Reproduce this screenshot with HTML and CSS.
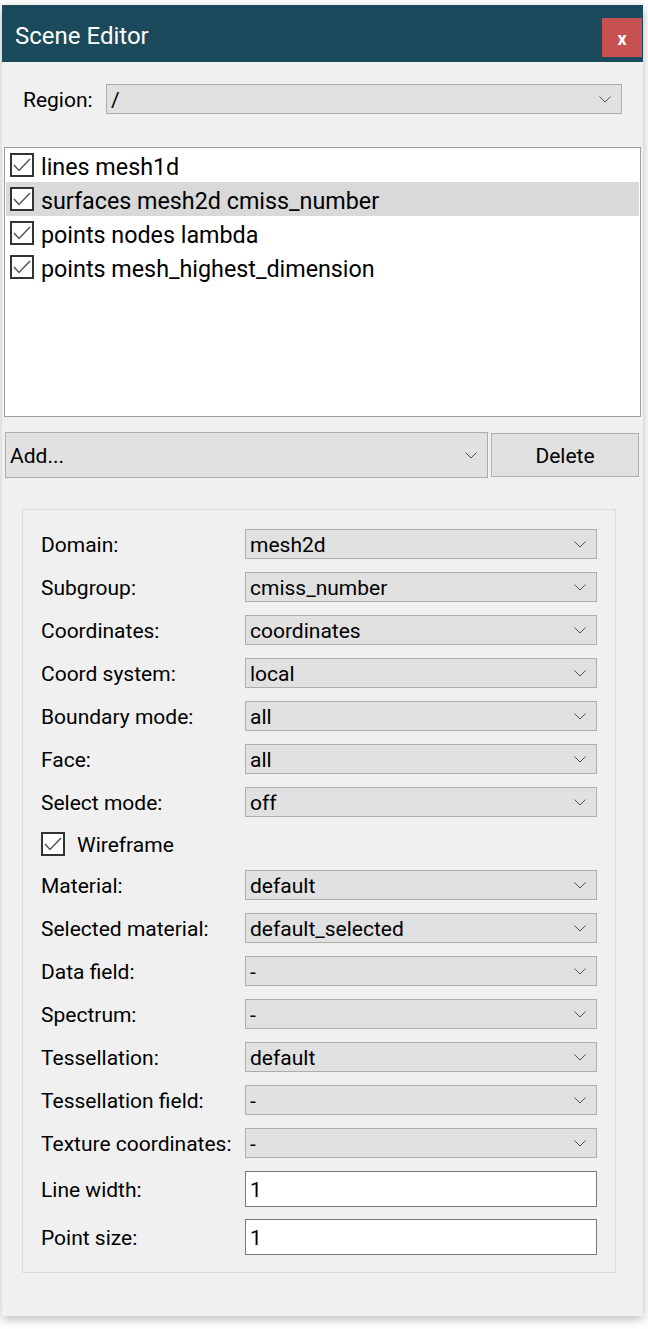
FILE: index.html
```html
<!DOCTYPE html>
<html>
<head>
<meta charset="utf-8">
<link rel="stylesheet" href="styles.css">
</head>
<body>
<div class="screen">
  <div class="window">
    <div class="titlebar">
      <span class="title">Scene Editor</span>
      <div class="close">x</div>
    </div>
    <div class="content">
      <div class="region-row">
        <span class="region-label">Region:</span>
        <div class="combo region-combo"><span>/</span><svg class="chev" width="12" height="7" viewBox="0 0 12 7"><polyline points="0.5,0.5 6,6 11.5,0.5"/></svg></div>
      </div>
      <div class="list">
        <div class="list-item"><span class="check"><svg width="20" height="20" viewBox="0 0 20 20"><polyline points="2,10 7,15.5 18,4"/></svg></span><span>lines mesh1d</span></div>
        <div class="list-item selected"><span class="check"><svg width="20" height="20" viewBox="0 0 20 20"><polyline points="2,10 7,15.5 18,4"/></svg></span><span>surfaces mesh2d cmiss_number</span></div>
        <div class="list-item"><span class="check"><svg width="20" height="20" viewBox="0 0 20 20"><polyline points="2,10 7,15.5 18,4"/></svg></span><span>points nodes lambda</span></div>
        <div class="list-item"><span class="check"><svg width="20" height="20" viewBox="0 0 20 20"><polyline points="2,10 7,15.5 18,4"/></svg></span><span>points mesh_highest_dimension</span></div>
      </div>
      <div class="add-row">
        <div class="combo add-combo"><span>Add...</span><svg class="chev" width="12" height="7" viewBox="0 0 12 7"><polyline points="0.5,0.5 6,6 11.5,0.5"/></svg></div>
        <div class="button">Delete</div>
      </div>
      <div class="group">
        <span class="label">Domain:</span>
        <div class="combo"><span>mesh2d</span><svg class="chev" width="12" height="7" viewBox="0 0 12 7"><polyline points="0.5,0.5 6,6 11.5,0.5"/></svg></div>
        <span class="label">Subgroup:</span>
        <div class="combo"><span>cmiss_number</span><svg class="chev" width="12" height="7" viewBox="0 0 12 7"><polyline points="0.5,0.5 6,6 11.5,0.5"/></svg></div>
        <span class="label">Coordinates:</span>
        <div class="combo"><span>coordinates</span><svg class="chev" width="12" height="7" viewBox="0 0 12 7"><polyline points="0.5,0.5 6,6 11.5,0.5"/></svg></div>
        <span class="label">Coord system:</span>
        <div class="combo"><span>local</span><svg class="chev" width="12" height="7" viewBox="0 0 12 7"><polyline points="0.5,0.5 6,6 11.5,0.5"/></svg></div>
        <span class="label">Boundary mode:</span>
        <div class="combo"><span>all</span><svg class="chev" width="12" height="7" viewBox="0 0 12 7"><polyline points="0.5,0.5 6,6 11.5,0.5"/></svg></div>
        <span class="label">Face:</span>
        <div class="combo"><span>all</span><svg class="chev" width="12" height="7" viewBox="0 0 12 7"><polyline points="0.5,0.5 6,6 11.5,0.5"/></svg></div>
        <span class="label">Select mode:</span>
        <div class="combo"><span>off</span><svg class="chev" width="12" height="7" viewBox="0 0 12 7"><polyline points="0.5,0.5 6,6 11.5,0.5"/></svg></div>
        <div class="wire-row"><span class="check"><svg width="20" height="20" viewBox="0 0 20 20"><polyline points="2,10 7,15.5 18,4"/></svg></span><span>Wireframe</span></div>
        <span class="label">Material:</span>
        <div class="combo"><span>default</span><svg class="chev" width="12" height="7" viewBox="0 0 12 7"><polyline points="0.5,0.5 6,6 11.5,0.5"/></svg></div>
        <span class="label">Selected material:</span>
        <div class="combo"><span>default_selected</span><svg class="chev" width="12" height="7" viewBox="0 0 12 7"><polyline points="0.5,0.5 6,6 11.5,0.5"/></svg></div>
        <span class="label">Data field:</span>
        <div class="combo"><span>-</span><svg class="chev" width="12" height="7" viewBox="0 0 12 7"><polyline points="0.5,0.5 6,6 11.5,0.5"/></svg></div>
        <span class="label">Spectrum:</span>
        <div class="combo"><span>-</span><svg class="chev" width="12" height="7" viewBox="0 0 12 7"><polyline points="0.5,0.5 6,6 11.5,0.5"/></svg></div>
        <span class="label">Tessellation:</span>
        <div class="combo"><span>default</span><svg class="chev" width="12" height="7" viewBox="0 0 12 7"><polyline points="0.5,0.5 6,6 11.5,0.5"/></svg></div>
        <span class="label">Tessellation field:</span>
        <div class="combo"><span>-</span><svg class="chev" width="12" height="7" viewBox="0 0 12 7"><polyline points="0.5,0.5 6,6 11.5,0.5"/></svg></div>
        <span class="label">Texture coordinates:</span>
        <div class="combo"><span>-</span><svg class="chev" width="12" height="7" viewBox="0 0 12 7"><polyline points="0.5,0.5 6,6 11.5,0.5"/></svg></div>
        <span class="label">Line width:</span>
        <div class="lineedit">1</div>
        <span class="label last">Point size:</span>
        <div class="lineedit last">1</div>
      </div>
    </div>
  </div>
</div>
</body>
</html>
```
FILE: styles.css
```css
* { box-sizing: border-box; }
html, body {
  margin: 0;
  padding: 0;
  background: #ffffff;
}
body {
  font-family: Roboto, "Liberation Sans", sans-serif;
  color: #000;
  width: 648px;
  height: 1329px;
  overflow: hidden;
}
.screen {
  padding: 5px 5px 0 2px;
}
.window {
  width: 641px;
  height: 1311px;
  background: #f0f0f0;
  display: flex;
  flex-direction: column;
  box-shadow: 0 3px 10px rgba(0, 0, 0, 0.28);
}
.titlebar {
  height: 57px;
  flex: none;
  background: #1b4a5c;
  display: flex;
  align-items: flex-start;
  justify-content: space-between;
}
.title {
  color: #ffffff;
  font-size: 24px;
  line-height: 28px;
  margin: 17px 0 0 13px;
}
.close {
  width: 40px;
  height: 39px;
  margin: 13px 1px 0 0;
  background: #c75050;
  color: #ffffff;
  font-weight: 700;
  font-size: 18px;
  display: flex;
  align-items: center;
  justify-content: center;
  padding-top: 1px;
}
.content {
  flex: 1;
  display: flex;
  flex-direction: column;
  padding: 0;
}
.region-row {
  margin-top: 22px;
  padding-left: 21px;
  display: flex;
  align-items: center;
  font-size: 21px;
}
.region-label {
  width: 83px;
  flex: none;
  padding-top: 2px;
}
.combo {
  height: 30px;
  background: #e1e1e1;
  border: 1px solid #adadad;
  display: flex;
  align-items: center;
  justify-content: space-between;
  padding: 2px 10px 0 4px;
  font-size: 21px;
  white-space: nowrap;
}
.combo .chev {
  margin-top: -2px;
}
.region-combo {
  width: 516px;
}
.chev {
  flex: none;
  fill: none;
  stroke: #505050;
  stroke-width: 1;
}
.list {
  margin: 33px 0 0 2px;
  width: 637px;
  height: 270px;
  background: #ffffff;
  border: 1px solid #a0a0a0;
  padding: 0;
  display: flex;
  flex-direction: column;
}
.list-item {
  height: 34px;
  margin: 0 1px;
  padding-left: 4px;
  display: flex;
  align-items: center;
  gap: 7px;
  font-size: 23.3px;
  white-space: nowrap;
}
.list-item > span:last-child {
  padding-top: 3px;
}
.list-item.selected {
  background: #d9d9d9;
}
.check {
  width: 24px;
  height: 24px;
  flex: none;
  border: 2px solid #333333;
  background: #ffffff;
  display: flex;
  align-items: center;
  justify-content: center;
}
.check svg {
  fill: none;
  stroke: #555555;
  stroke-width: 1.5;
}
.add-row {
  margin: 15px 0 0 3px;
  display: flex;
  align-items: center;
  gap: 3px;
}
.add-combo {
  width: 483px;
  height: 46px;
}
.button {
  width: 148px;
  height: 44px;
  background: #e1e1e1;
  border: 1px solid #adadad;
  display: flex;
  align-items: center;
  justify-content: center;
  font-size: 21px;
  padding-top: 2px;
}
.group {
  margin: 31px 0 0 20px;
  width: 594px;
  border: 1px solid #dcdcdc;
  padding: 19px 18px 17px 18px;
  display: grid;
  grid-template-columns: 204px 1fr;
  row-gap: 13px;
  align-items: center;
}
.label {
  font-size: 21px;
  white-space: nowrap;
  padding-top: 2px;
}
.wire-row {
  grid-column: 1 / 3;
  height: 27px;
  display: flex;
  align-items: center;
  gap: 12px;
  font-size: 21px;
}
.wire-row > span:last-child {
  padding-top: 2px;
}
.lineedit {
  height: 36px;
  background: #ffffff;
  border: 1px solid #7a7a7a;
  padding: 2px 0 0 4px;
  display: flex;
  align-items: center;
  font-size: 21px;
}
.last {
  margin-top: -1px;
}
```
